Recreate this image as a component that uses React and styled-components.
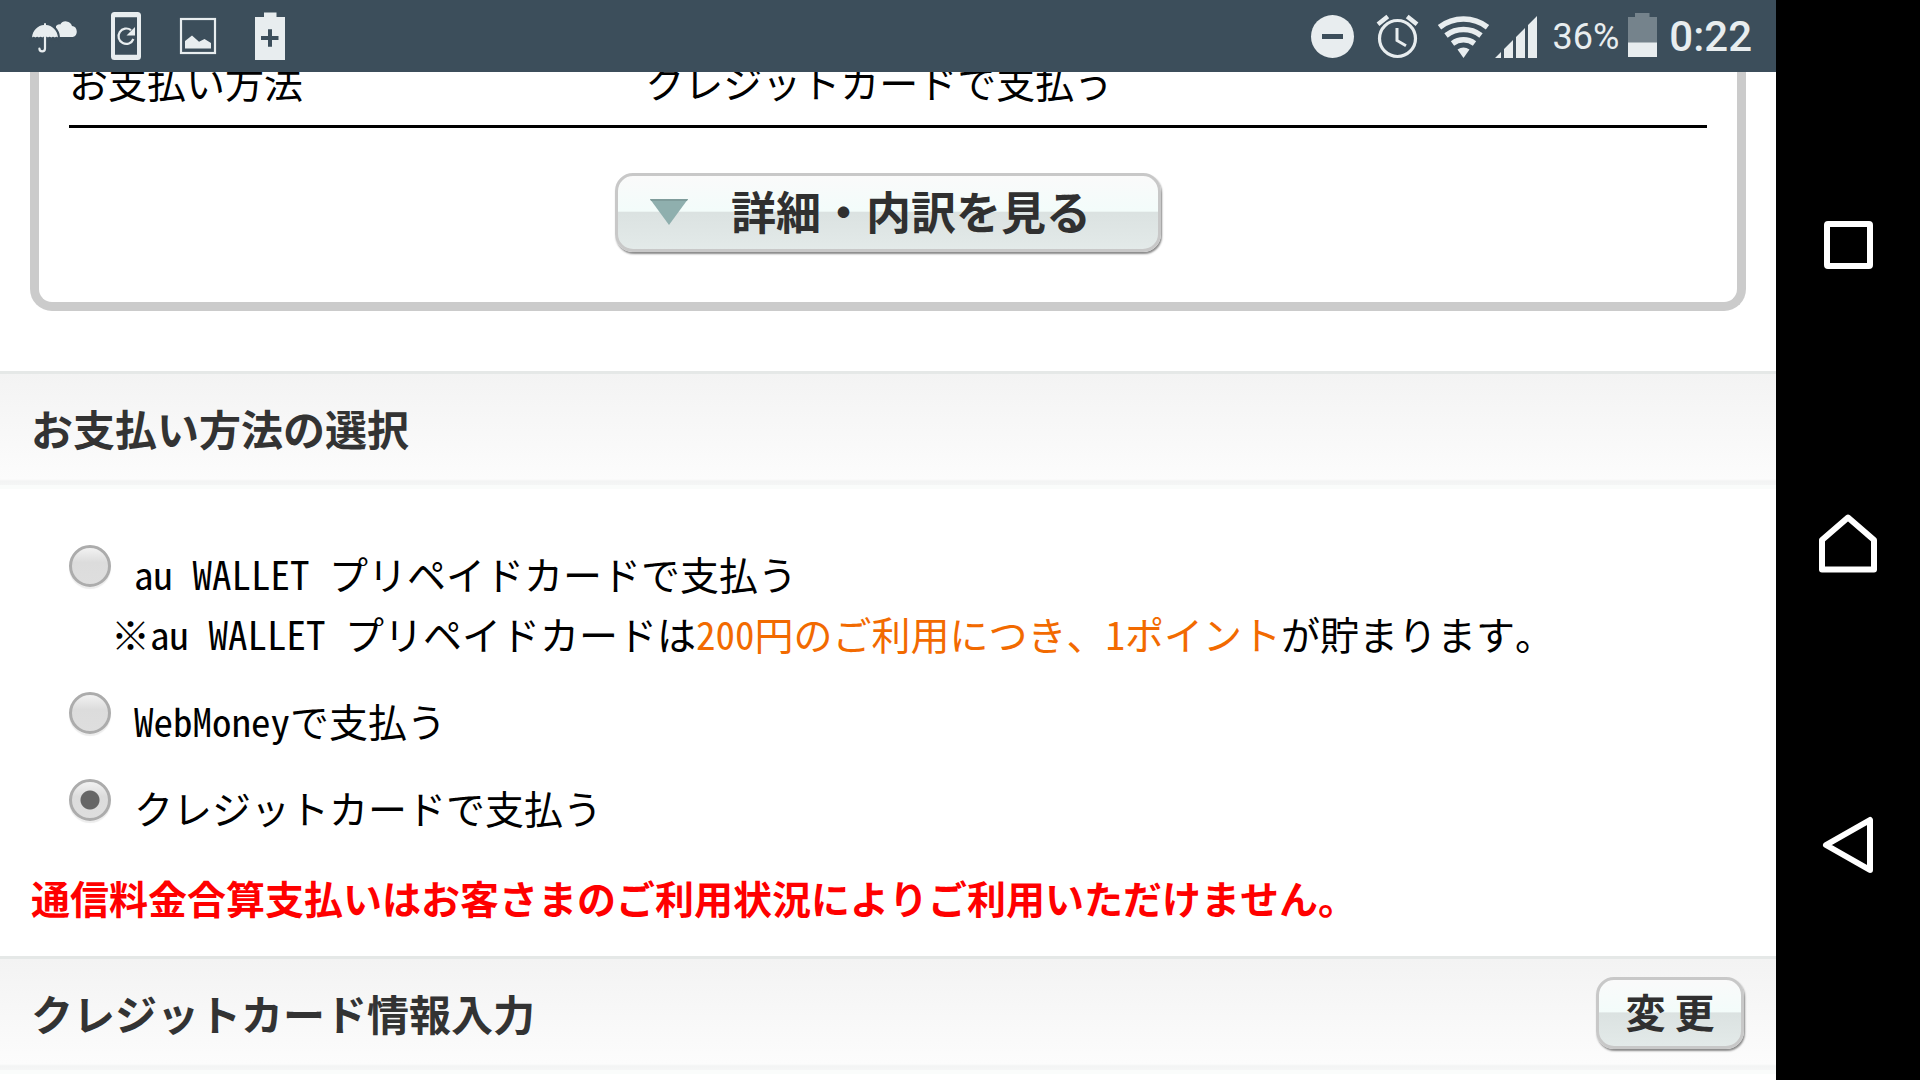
import React, { useState } from "react";
import styled, { createGlobalStyle } from "styled-components";

const App = () => {
  const [method, setMethod] = useState("credit");
  const radioProps = (value) => ({
    name: "method",
    value,
    checked: method === value,
    onChange: () => setMethod(value),
  });

  return (
    <Screen>
      <GlobalStyle />
      <Device>
        <StatusBar />
        <main>
          <Card>
            <Summary>
              <dt>お支払い方法</dt>
              <dd>クレジットカードで支払う</dd>
            </Summary>
            <DetailButton type="button">
              <svg width="38" height="28" viewBox="0 0 38 28" aria-hidden="true">
                <path d="M0 2h38L19 28z" fill="#8fafae" />
                <path d="M0 2h38l-1 2H1z" fill="#7f9c9b" />
              </svg>
              詳細・内訳を見る
            </DetailButton>
          </Card>

          <SectionHeader>
            <h2>お支払い方法の選択</h2>
          </SectionHeader>
          <Options>
            <li>
              <OptionLabel>
                <Radio {...radioProps("wallet")} />
                au WALLET プリペイドカードで支払う
              </OptionLabel>
              <Note>
                ※au WALLET プリペイドカードは<Accent>200円のご利用につき、1ポイント</Accent>が貯まります。
              </Note>
            </li>
            <li>
              <OptionLabel>
                <Radio {...radioProps("webmoney")} />
                WebMoneyで支払う
              </OptionLabel>
            </li>
            <li>
              <OptionLabel>
                <Radio {...radioProps("credit")} />
                クレジットカードで支払う
              </OptionLabel>
            </li>
          </Options>
          <Warning>通信料金合算支払いはお客さまのご利用状況によりご利用いただけません。</Warning>

          <SectionHeader>
            <h2>クレジットカード情報入力</h2>
            <ChangeButton type="button">変 更</ChangeButton>
          </SectionHeader>
        </main>
      </Device>
      <NavBar />
    </Screen>
  );
};

export default App;

const StatusBar = () => (
  <Bar>
    <BarGroup>
      {/* weather */}
      <svg width="72" height="72" viewBox="0 0 72 72">
        <path d="M38 37V26q2-2.200 4.200-1.500a6.500 6.500 0 0 1 11.800 1.600 5.600 5.600 0 0 1 .8 10.900z" />
        <path
          d="M14 37.500C14.500 30 20 25.300 26 24.900V23.200h2v1.700c6 .4 11.500 5.100 12 12.600q-1.500-1.700-3.200 0-1.800-1.700-3.500 0-1.700-1.700-3.400 0-.4-.6-1.300-.8h-3q-.8.2-1.300.8-1.700-1.700-3.400 0-1.700-1.700-3.500 0-1.700-1.700-3.400 0z"
          stroke="#3c4e5b"
          strokeWidth="4"
          paintOrder="stroke"
        />
        <path d="M27 36v12.500a2.800 2.800 0 0 1-5.600 0" fill="none" stroke="#e8edef" strokeWidth="2.200" strokeLinecap="round" />
      </svg>
      {/* phone update */}
      <svg width="72" height="72" viewBox="0 0 72 72">
        <path
          fillRule="evenodd"
          d="M24.500 12h23q3.500 0 3.500 3.500v41q0 3.500-3.500 3.500h-23q-3.500 0-3.500-3.500v-41q0-3.500 3.500-3.500zM25 17.300v37.400h22V17.300z"
        />
        <path d="M41 30.200a7.700 7.700 0 1 0 2.400 8.800" fill="none" stroke="#e8edef" strokeWidth="2.200" />
        <path d="M45 27v8.500h-8.500z" />
      </svg>
      {/* picture */}
      <svg width="72" height="72" viewBox="0 0 72 72">
        <rect x="19" y="19" width="34" height="34" fill="none" stroke="#e8edef" strokeWidth="2.200" />
        <path d="M23 48.500V41l7-5.500 7 6.200 5.500-2.700 6.500 4v5.500z" />
      </svg>
      {/* battery saver */}
      <svg width="72" height="72" viewBox="0 0 72 72">
        <path
          fillRule="evenodd"
          d="M21 17h9v-4.500h12.500V17H51v43H21zM34 29.300V36h-7v4h7v6.700h4V40h6.500v-4H38v-6.700z"
        />
      </svg>
    </BarGroup>
    <BarGroup>
      {/* do not disturb */}
      <svg width="66" height="72" viewBox="0 0 66 72">
        <circle cx="33.500" cy="36.500" r="21.500" />
        <path d="M23 34h21v5H23z" fill="#3c4e5b" />
      </svg>
      {/* alarm */}
      <svg width="66" height="72" viewBox="0 0 66 72">
        <circle cx="32.500" cy="38.500" r="18" fill="none" stroke="#e8edef" strokeWidth="3.200" />
        <path d="M32 28v12.500l9 5.200" fill="none" stroke="#e8edef" strokeWidth="3" />
        <path d="M13 24.200l9.800-7.700M52 24.200l-9.800-7.700" fill="none" stroke="#e8edef" strokeWidth="4.500" />
      </svg>
      {/* wifi */}
      <svg width="66" height="72" viewBox="0 0 66 72">
        <g fill="none" stroke="#e8edef" strokeWidth="5.500">
          <path d="M8.500 27.200a39.500 39.500 0 0 1 48 0" />
          <path d="M15 35.500a29 29 0 0 1 35 0" />
          <path d="M21.500 43.500a18.500 18.500 0 0 1 22 0" />
        </g>
        <path d="M32.500 58l-6-8.500q6-4 12 0z" />
      </svg>
      {/* signal */}
      <svg width="48" height="72" viewBox="0 0 48 72">
        <path d="M-2 58l6-6v6zM7 49l9-9v18H7zM19 37l9-9v30h-9zM31 25l9-9v42h-9z" />
      </svg>
      <Percent>36%</Percent>
      <svg width="29" height="72" viewBox="0 0 29 72">
        <path d="M0 17h7v-4h14.500v4H29v26H0z" fill="#75838c" />
        <path d="M0 42.500h29V57H0z" />
      </svg>
      <Clock>0:22</Clock>
    </BarGroup>
  </Bar>
);

const NavBar = () => (
  <Nav>
    <NavButton type="button" aria-label="Recent apps">
      <svg width="60" height="60" viewBox="0 0 60 60">
        <rect x="9" y="10" width="43" height="42" rx="1" />
      </svg>
    </NavButton>
    <NavButton type="button" aria-label="Home">
      <svg width="60" height="60" viewBox="0 0 60 60">
        <path d="M4 26L30 3.500 56 26v29.500H4z" />
      </svg>
    </NavButton>
    <NavButton type="button" aria-label="Back">
      <svg width="60" height="60" viewBox="0 0 60 60">
        <path d="M52 6v50L8 31z" />
      </svg>
    </NavButton>
  </Nav>
);

//styled Components
const GlobalStyle = createGlobalStyle`
  * {
    box-sizing: border-box;
  }
  body {
    margin: 0;
    background-color: #000;
  }
`;
const Screen = styled.div`
  display: flex;
  height: 100vh;
  overflow: hidden;
  font-family: "Noto Sans Mono CJK JP", "Noto Sans CJK JP", sans-serif;
  font-size: 39px;
  line-height: 60px;
  color: #000;
`;
const Device = styled.div`
  flex: 1;
  min-width: 0;
  background-color: #fff;

  main {
    overflow: hidden;
  }
`;
const Bar = styled.header`
  display: flex;
  justify-content: space-between;
  height: 72px;
  padding: 0 24px 0 18px;
  background-color: #3c4e5b;
  color: #e8edef;
  font-family: Roboto, sans-serif;
  line-height: 74px;
`;
const BarGroup = styled.div`
  display: flex;

  svg {
    fill: #e8edef;
    overflow: visible;
  }
`;
const Percent = styled.span`
  margin: 0 9px 0 7px;
  font-size: 36px;
`;
const Clock = styled.time`
  margin-left: 12px;
  font-size: 42px;
  font-weight: 500;
`;
const Card = styled.section`
  display: flex;
  flex-direction: column;
  align-items: center;
  margin: 0 30px 60px;
  padding: 0 30px 50px;
  border: 9px solid #cbcbcb;
  border-top: none;
  border-radius: 0 0 22px 22px;
`;
/* already scrolled a little under the status bar */
const Summary = styled.dl`
  display: grid;
  grid-template-columns: 35% 1fr;
  width: 100%;
  margin: -21px 0 45px;
  padding-bottom: 14px;
  border-bottom: 3px solid #000;

  dd {
    margin: 0;
    padding-left: 3px;
  }
`;
const GlossyButton = styled.button`
  display: flex;
  align-items: center;
  border: 3px solid #c8c8c8;
  background: linear-gradient(#fafafa, #f3fcfa 48%, #dbe2e1 50%, #e3eae9);
  box-shadow: 1px 2px 2px #8a8a8a;
  color: #303030;
  font-family: "Noto Sans CJK JP", sans-serif;
  font-weight: 700;
  cursor: pointer;
`;
const DetailButton = styled(GlossyButton)`
  gap: 43px;
  width: 546px;
  height: 79px;
  padding: 0 0 4px 32px;
  border-radius: 18px;
  font-size: 45px;
`;
const ChangeButton = styled(GlossyButton)`
  justify-content: center;
  width: 148px;
  height: 72px;
  padding: 0 0 4px;
  border-radius: 18px;
  font-size: 40px;
`;
const SectionHeader = styled.div`
  display: flex;
  align-items: center;
  justify-content: space-between;
  height: 118px;
  padding: 0 32px 3px 31px;
  border-top: 3px solid #e5e8e7;
  border-bottom: 4px solid #fafcfb;
  background: linear-gradient(#f3f3f3, #fcfcfc 105px, #f3f4f4 107px, #f5f6f6);

  h2 {
    margin: 0;
    color: #333;
    font-size: 42px;
    font-weight: 700;
  }
`;
const Options = styled.ul`
  display: flex;
  flex-direction: column;
  gap: 27px;
  margin: 0;
  padding: 54px 69px 0;
  list-style: none;
`;
const OptionLabel = styled.label`
  display: flex;
  align-items: flex-start;
  gap: 23px;
`;
const Radio = styled.input.attrs({ type: "radio" })`
  appearance: none;
  flex: none;
  width: 42px;
  height: 42px;
  margin: 2px 0 0;
  border: 3px solid #acacac;
  border-radius: 50%;
  background: linear-gradient(#f2f2f2, #dcdcdc 40%, #dedede);
  box-shadow: 0 2px 1px #ececec;

  &:checked {
    background: radial-gradient(circle, #666 9px, transparent 10px),
      linear-gradient(#f2f2f2, #dcdcdc 40%, #dedede);
  }
`;
const Note = styled.p`
  margin: 0;
  padding-left: 42px;
`;
const Accent = styled.span`
  color: #f26a00;
`;
const Warning = styled.p`
  margin: 0;
  padding: 30px 31px 29px;
  color: #f00;
  font-weight: 700;
`;
const Nav = styled.nav`
  display: flex;
  flex-direction: column;
  justify-content: center;
  width: 144px;
  padding-top: 8px;
  background-color: #000;
`;
const NavButton = styled.button`
  height: 300px;
  padding: 0;
  border: none;
  background: none;
  cursor: pointer;

  svg {
    display: block;
    margin: 0 auto;
    fill: none;
    stroke: #fff;
    stroke-width: 6px;
    stroke-linejoin: round;
  }
`;
